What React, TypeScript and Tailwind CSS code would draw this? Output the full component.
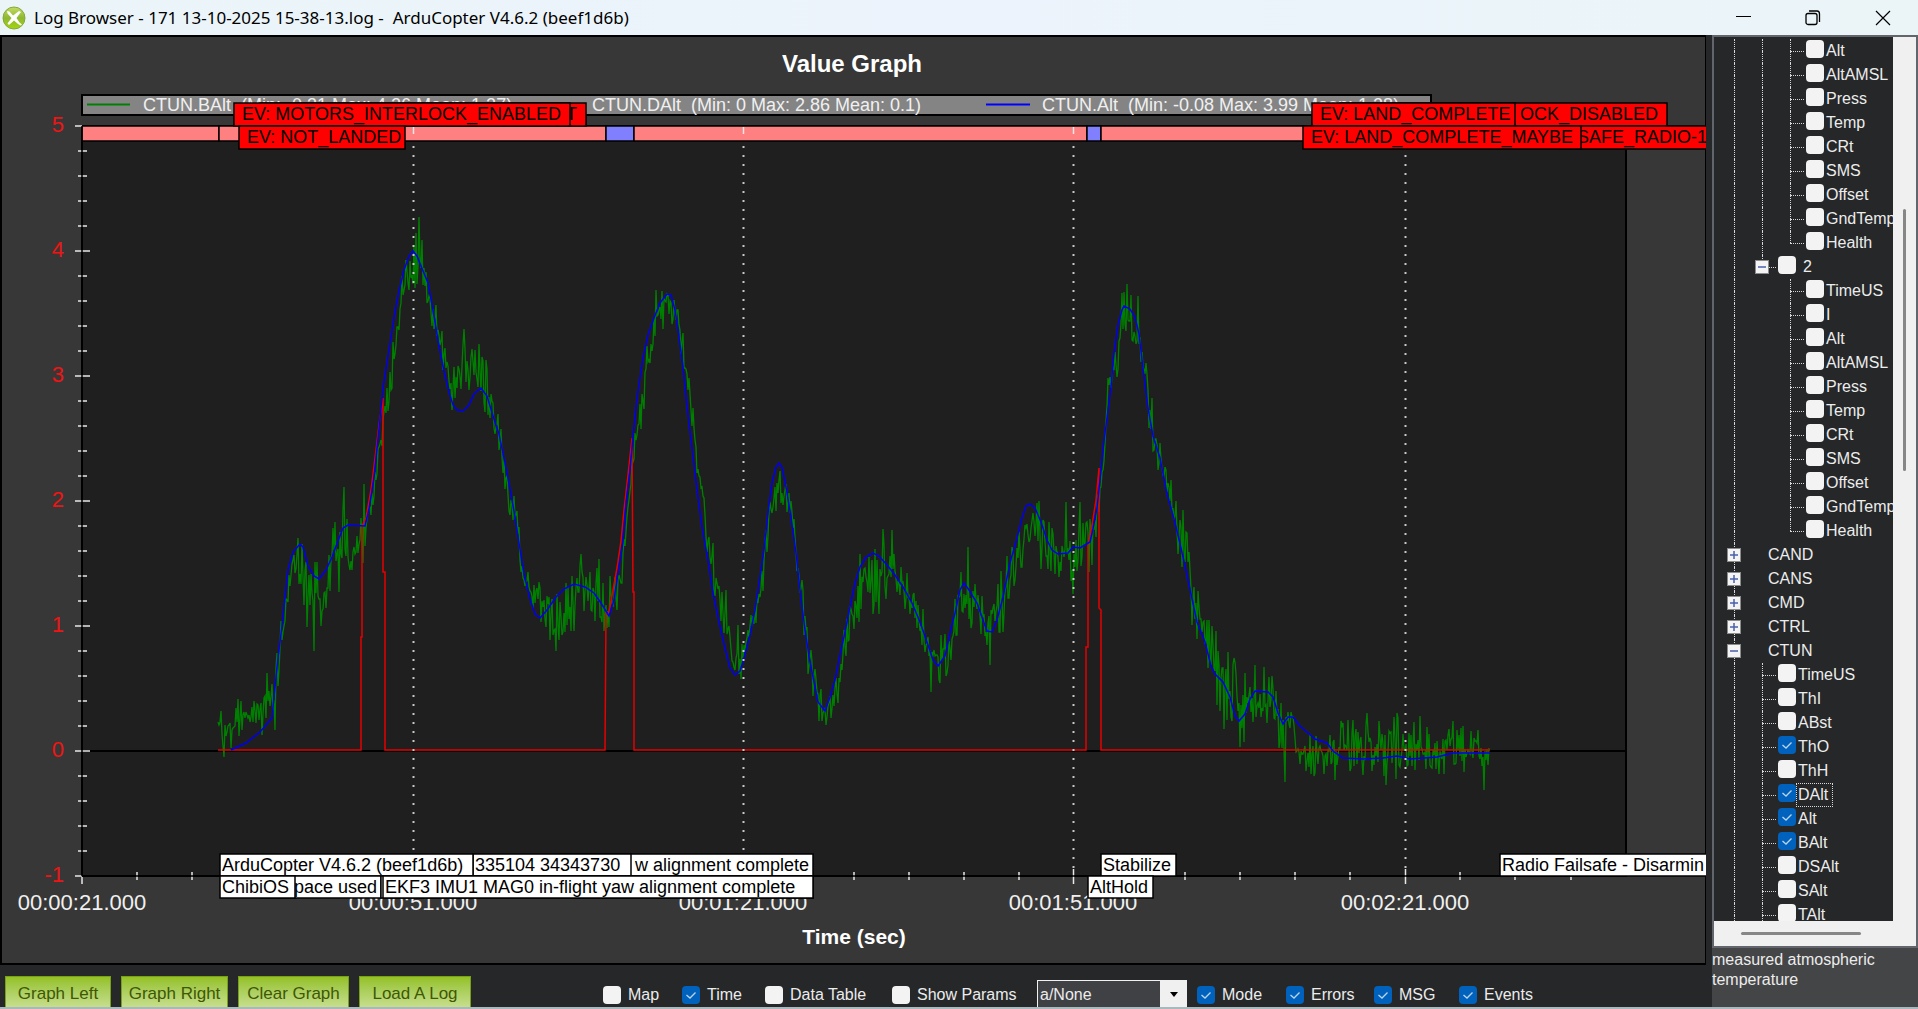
import { useState } from "react";
import clsx from "clsx";

type Point = [number, number];

// Filtered altitude (CTUN.Alt)
const ALT: Point[] = [
  [231, 750], [246, 743], [260, 732], [272, 718], [274, 697], [278, 658], [282, 626], [285, 597], [288, 570], [293, 552],
  [300, 544], [303, 547], [308, 566], [314, 576], [319, 579], [326, 570], [332, 557], [338, 541], [343, 528], [348, 525],
  [365, 526], [369, 509], [374, 478], [377, 448], [379, 429], [383, 388], [388, 356], [395, 312], [399, 291], [404, 270],
  [409, 256], [413, 251], [417, 256], [421, 266], [428, 283], [433, 310], [439, 346], [444, 371], [449, 392], [453, 405],
  [457, 410], [463, 411], [469, 405], [474, 394], [481, 388], [487, 396], [494, 419], [499, 434], [505, 463], [511, 494],
  [515, 517], [519, 543], [524, 574], [530, 599], [535, 614], [540, 618], [547, 610], [556, 597], [564, 589], [574, 584],
  [585, 587], [594, 593], [601, 603], [609, 616], [614, 600], [618, 573], [623, 542], [626, 503], [630, 470], [633, 437],
  [637, 398], [643, 358], [648, 335], [654, 318], [660, 303], [667, 294], [671, 295], [675, 310], [679, 337], [683, 367],
  [687, 407], [692, 448], [697, 490], [702, 527], [708, 560], [713, 593], [719, 622], [725, 648], [730, 668], [735, 675],
  [740, 671], [744, 658], [750, 635], [755, 610], [760, 577], [764, 550], [768, 513], [772, 483], [776, 467], [779, 463],
  [782, 467], [786, 487], [791, 517], [796, 553], [800, 590], [805, 630], [810, 662], [814, 682], [818, 702], [825, 711],
  [830, 697], [835, 680], [840, 655], [845, 632], [850, 607], [855, 583], [860, 567], [866, 557], [873, 553], [879, 556],
  [887, 565], [895, 575], [903, 587], [912, 603], [920, 622], [928, 645], [933, 660], [938, 666], [945, 656], [950, 633],
  [955, 613], [960, 590], [964, 583], [969, 590], [977, 603], [983, 620], [987, 631], [992, 632], [997, 620], [1003, 597],
  [1010, 563], [1017, 538], [1022, 518], [1026, 506], [1030, 504], [1035, 508], [1041, 522], [1047, 540], [1052, 550], [1058, 554],
  [1068, 553], [1073, 547], [1080, 548], [1090, 542], [1093, 529], [1097, 508], [1101, 470], [1103, 449], [1107, 418], [1111, 387],
  [1114, 353], [1118, 325], [1122, 310], [1124, 306], [1130, 309], [1135, 317], [1139, 334], [1143, 368], [1148, 408], [1153, 436],
  [1160, 458], [1167, 494], [1173, 515], [1178, 535], [1185, 566], [1191, 594], [1197, 622], [1205, 642], [1211, 666], [1215, 674],
  [1223, 682], [1230, 697], [1235, 716], [1239, 721], [1245, 714], [1250, 699], [1255, 691], [1268, 692], [1273, 697], [1278, 713],
  [1283, 724], [1288, 717], [1293, 717], [1300, 726], [1315, 739], [1327, 743], [1333, 751], [1343, 758], [1363, 759], [1383, 758],
  [1397, 756], [1410, 759], [1437, 757], [1453, 753], [1490, 753],
];

// Desired altitude (CTUN.DAlt)
const DALT: Point[] = [
  [218, 750], [361, 750], [361, 637], [362, 637], [362, 526], [366, 518], [371, 490], [376, 450], [379, 425], [383, 398],
  [383, 572], [385, 572], [385, 750], [605, 750], [606, 613], [609, 612], [613, 590], [617, 568], [621, 541], [624, 510],
  [628, 475], [632, 438], [633, 592], [634, 592], [634, 750], [1086, 750], [1086, 647], [1088, 647], [1088, 546], [1092, 525],
  [1096, 500], [1099, 468], [1099, 608], [1101, 610], [1101, 750], [1490, 750],
];

// Barometer altitude (CTUN.BAlt): x, centre, noise
const BALT: [number, number, number][] = [
  [218, 732, 12], [224, 735, 20], [236, 725, 22], [250, 718, 14], [258, 705, 22], [270, 705, 22], [275, 690, 30], [281, 640, 20],
  [287, 600, 15], [294, 565, 22], [300, 572, 25], [306, 590, 28], [313, 595, 35], [318, 600, 25], [326, 590, 15], [332, 560, 25],
  [344, 545, 32], [348, 560, 25], [356, 555, 18], [365, 530, 30], [372, 500, 18], [380, 455, 14], [387, 400, 22], [394, 350, 20],
  [402, 285, 12], [408, 262, 25], [414, 258, 28], [420, 258, 32], [426, 285, 16], [433, 305, 20], [441, 350, 15], [449, 385, 22],
  [455, 390, 15], [463, 362, 28], [470, 375, 25], [478, 375, 25], [486, 390, 25], [494, 415, 18], [502, 455, 20], [505, 478, 15],
  [515, 520, 15], [520, 550, 18], [528, 590, 18], [536, 598, 20], [548, 612, 20], [555, 625, 22], [565, 605, 28], [575, 595, 26],
  [588, 590, 28], [600, 600, 28], [610, 612, 26], [617, 600, 25], [625, 540, 18], [633, 470, 18], [641, 400, 25], [649, 350, 20],
  [656, 318, 20], [668, 302, 18], [676, 312, 15], [684, 340, 18], [690, 400, 12], [697, 455, 15], [704, 505, 18], [713, 570, 20],
  [724, 610, 15], [733, 665, 12], [740, 660, 18], [750, 640, 18], [758, 605, 15], [765, 550, 20], [775, 495, 18], [782, 490, 22],
  [790, 505, 12], [798, 565, 15], [804, 615, 18], [808, 650, 22], [816, 685, 20], [822, 710, 12], [830, 705, 15], [838, 680, 22],
  [850, 620, 20], [858, 590, 22], [868, 580, 24], [878, 580, 26], [890, 572, 24], [900, 577, 20], [910, 600, 20], [920, 620, 18],
  [930, 655, 18], [940, 660, 18], [950, 650, 28], [960, 595, 28], [968, 598, 28], [980, 615, 25], [990, 625, 30], [1000, 615, 28],
  [1010, 580, 25], [1020, 545, 22], [1030, 525, 22], [1040, 530, 26], [1050, 540, 26], [1063, 550, 28], [1073, 570, 20], [1083, 545, 28],
  [1093, 545, 20], [1102, 475, 20], [1108, 400, 18], [1117, 360, 14], [1122, 315, 18], [1130, 310, 20], [1137, 325, 26], [1143, 360, 12],
  [1151, 425, 25], [1158, 448, 18], [1168, 490, 18], [1180, 535, 26], [1190, 570, 28], [1197, 620, 20], [1205, 640, 22], [1215, 660, 26],
  [1225, 690, 32], [1240, 705, 32], [1250, 700, 26], [1265, 700, 24], [1278, 715, 22], [1284, 735, 30], [1290, 720, 15], [1298, 750, 14],
  [1312, 755, 18], [1330, 752, 20], [1350, 745, 24], [1365, 750, 24], [1400, 748, 26], [1440, 750, 22], [1490, 750, 18],
];

const SPIKES: Point[] = [
  [224, 757], [298, 538], [314, 651], [344, 487], [364, 484], [419, 217], [464, 329], [486, 360], [556, 651], [581, 554],
  [656, 290], [726, 590], [738, 625], [826, 725], [883, 529], [892, 530], [931, 692], [968, 547], [1066, 502], [1080, 502],
  [1124, 292], [1138, 296], [1183, 510], [1224, 729], [1264, 667], [1285, 782], [1335, 780], [1348, 720], [1453, 721], [1484, 790],
];

function toPath(points: Point[]) {
  return "M" + points.map((p) => p.join(",")).join("L");
}

function noisyPath() {
  let seed = 171;
  const rand = () => {
    seed = (seed * 16807) % 2147483647;
    return seed / 2147483647;
  };
  const out: Point[] = [];
  let i = 0;
  for (let x = 218; x <= 1489; x += 1) {
    while (i < BALT.length - 2 && x > BALT[i + 1][0]) i++;
    const [x0, y0, a0] = BALT[i];
    const [x1, y1, a1] = BALT[i + 1];
    const t = (x - x0) / (x1 - x0);
    const amp = a0 + (a1 - a0) * t;
    const noise = (rand() + rand() - 1) * amp * 1.6;
    const spike = SPIKES.find((s) => s[0] === x);
    out.push([x, spike ? spike[1] : Math.round(y0 + (y1 - y0) * t + noise)]);
  }
  return toPath(out);
}

const BALT_PATH = noisyPath();
const ALT_PATH = toPath(ALT);
const DALT_PATH = toPath(DALT);

const TIMES = [
  { x: 82, label: "00:00:21.000" },
  { x: 413, label: "00:00:51.000" },
  { x: 743, label: "00:01:21.000" },
  { x: 1073, label: "00:01:51.000" },
  { x: 1405, label: "00:02:21.000" },
];

const MODES = [
  { x: 82, w: 137, color: "#ff8080" },
  { x: 219, w: 387, color: "#ff8080" },
  { x: 606, w: 28, color: "#8080ff" },
  { x: 634, w: 453, color: "#ff8080" },
  { x: 1087, w: 14, color: "#8080ff" },
  { x: 1101, w: 389, color: "#ff8080" },
];

// Later flags lie over earlier ones
const FLAGS = [
  { x: 260, w: 326, y: 103, end: true, text: "T", red: true },
  { x: 234, w: 336, y: 103, text: "EV: MOTORS_INTERLOCK_ENABLED", red: true },
  { x: 239, w: 166, y: 126, text: "EV: NOT_LANDED", red: true },
  { x: 1340, w: 327, y: 103, end: true, text: "OCK_DISABLED", red: true },
  { x: 1312, w: 203, y: 103, text: "EV: LAND_COMPLETE", red: true },
  { x: 1560, w: 156, y: 126, end: true, text: "SAFE_RADIO-1", red: true },
  { x: 1303, w: 278, y: 126, text: "EV: LAND_COMPLETE_MAYBE", red: true },
  { x: 560, w: 253, y: 854, end: true, text: "w alignment complete" },
  { x: 473, w: 158, y: 854, text: "335104 34343730" },
  { x: 220, w: 253, y: 854, text: "ArduCopter V4.6.2 (beef1d6b)" },
  { x: 260, w: 121, y: 876, end: true, text: "pace used" },
  { x: 220, w: 75, y: 876, text: "ChibiOS" },
  { x: 381, w: 432, y: 876, text: "" },
  { x: 383, w: 430, y: 876, text: "EKF3 IMU1 MAG0 in-flight yaw alignment complete" },
  { x: 1101, w: 75, y: 854, text: "Stabilize" },
  { x: 1088, w: 65, y: 876, text: "AltHold" },
  { x: 1500, w: 240, y: 854, text: "Radio Failsafe - Disarmin" },
];

function Chart() {
  const minorX: number[] = [];
  for (let i = 0; i <= 27; i++) if (i % 6 !== 0) minorX.push(Math.round(82 + i * 55.13));
  const minorY: number[] = [];
  for (let i = 0; i <= 30; i++) if (i % 5 !== 0) minorY.push(126 + i * 25);

  return (
    <svg
      viewBox="0 35 1708 930"
      preserveAspectRatio="xMinYMin meet"
      className="block min-h-0 w-full flex-1 bg-[#252729] font-['Liberation_Sans',Arial,sans-serif]"
    >
      <rect x="1" y="36" width="1705" height="928" fill="#373737" stroke="#000" strokeWidth="2" />
      <text x="852" y="72" textAnchor="middle" fontSize="24" fontWeight="bold" fill="#fff">Value Graph</text>
      <rect x="82" y="126" width="1544" height="750" fill="#1f1f1f" stroke="#000" strokeWidth="2" />

      {/* Legend */}
      <rect x="82" y="95" width="1349" height="20" fill="#848484" stroke="#000" strokeWidth="2" />
      <g fontSize="18" fill="#f0f0f0">
        <path d="M87 104.500H130" stroke="#008000" strokeWidth="2" />
        <text x="143" y="111" xmlSpace="preserve">CTUN.BAlt  (Min: -0.31 Max: 4.26 Mean: 1.27)</text>
        <text x="592" y="111" xmlSpace="preserve">CTUN.DAlt  (Min: 0 Max: 2.86 Mean: 0.1)</text>
        <path d="M986 104.500H1030" stroke="#0000ff" strokeWidth="2" />
        <text x="1042" y="111" xmlSpace="preserve">CTUN.Alt  (Min: -0.08 Max: 3.99 Mean: 1.28)</text>
      </g>

      {/* Flight modes */}
      {MODES.map((m) => (
        <rect key={m.x} x={m.x} y="126" width={m.w} height="15" fill={m.color} stroke="#000" strokeWidth="1.500" />
      ))}

      {/* Axes */}
      <path d="M82 751H1626" stroke="#000" strokeWidth="2" />
      <g stroke="#e8e8e8" strokeWidth="1.500">
        {minorY.map((y) => <path key={y} d={`M78 ${y}H87`} />)}
        {minorX.map((x) => <path key={x} d={`M${x} 872V880`} />)}
        {[126, 251, 376, 501, 626, 751, 876].map((y) => (
          <path key={y} d={y === 126 || y === 876 ? `M75 ${y}H82` : `M75 ${y}H90`} />
        ))}
        <path d="M82 877V884" />
        {TIMES.slice(1).map((t) => <path key={t.x} d={`M${t.x + 0.5} 869V884M${t.x + 0.5} 127V134`} />)}
      </g>
      <path d="M82 126V876M82 876H1626" stroke="#000" strokeWidth="1.500" />
      <g fontSize="22" fill="#f01414" textAnchor="end">
        {[5, 4, 3, 2, 1, 0, -1].map((v) => (
          <text key={v} x="64" y={757 - v * 125}>{v}</text>
        ))}
      </g>
      <g fontSize="22" fill="#f0f0f0" textAnchor="middle">
        {TIMES.map((t) => (
          <text key={t.x} x={t.x} y="910">{t.label}</text>
        ))}
      </g>
      <text x="854" y="944" textAnchor="middle" fontSize="21" fontWeight="bold" fill="#fff">Time (sec)</text>

      {/* Series */}
      <g fill="none" strokeWidth="1.500">
        <path d={BALT_PATH} stroke="#008000" strokeWidth="1.300" />
        <path d={DALT_PATH} stroke="#e60000" />
        <path d={ALT_PATH} stroke="#0000f0" />
      </g>
      {TIMES.slice(1).map((t) => (
        <path key={t.x} d={`M${t.x + 0.5} 146V868`} stroke="#c8c8c8" strokeWidth="2" strokeDasharray="2 7" />
      ))}

      {FLAGS.map((f) => (
        <g key={f.text + f.x}>
          <rect x={f.x} y={f.y} width={f.w} height={f.red ? 23 : 22} fill={f.red ? "#ff0000" : "#fff"} stroke="#000" strokeWidth="1.500" />
          <text
            x={f.end ? f.x + f.w - (f.red ? 9 : 4) : f.x + (f.red ? 8 : 2)}
            y={f.y + 17}
            textAnchor={f.end ? "end" : "start"}
            fontSize="18"
            fill="#000"
          >
            {f.text}
          </text>
        </g>
      ))}
      <path d="M1707 35V965" stroke="#252729" strokeWidth="2" />
    </svg>
  );
}

function Check({ id, defaultChecked }: { id: string; defaultChecked?: boolean }) {
  const [checked, setChecked] = useState(!!defaultChecked);
  return (
    <span className="relative block h-[18px] w-[18px] shrink-0">
      <input
        id={id}
        type="checkbox"
        checked={checked}
        onChange={(e) => setChecked(e.target.checked)}
        className="block h-[18px] w-[18px] appearance-none rounded bg-[#f3f3f3] checked:bg-[#0062bd]"
      />
      {checked && (
        <svg viewBox="0 0 18 18" className="pointer-events-none absolute inset-0 h-[18px] w-[18px]">
          <path d="M4.500 9L8 12L13.500 6.500" fill="none" stroke="#b9d5ee" strokeWidth="1.300" />
        </svg>
      )}
    </span>
  );
}

// Guides, one character for a column:
// "|" line, " " blank, "t" branch, "e" last branch, "+"/"-" expander, "n" last expander
type Row = { guides: string; label: string; checked?: boolean; focused?: boolean };

const BARO = ["Alt", "AltAMSL", "Press", "Temp", "CRt", "SMS", "Offset", "GndTemp", "Health"];

const ROWS: Row[] = [
  ...BARO.map((label) => ({ guides: label === "Health" ? "||e" : "||t", label })),
  { guides: "|n", label: "2" },
  ...["TimeUS", "I", ...BARO].map((label) => ({ guides: label === "Health" ? "| e" : "| t", label })),
  { guides: "+", label: "CAND" },
  { guides: "+", label: "CANS" },
  { guides: "+", label: "CMD" },
  { guides: "+", label: "CTRL" },
  { guides: "-", label: "CTUN" },
  { guides: "|t", label: "TimeUS" },
  { guides: "|t", label: "ThI" },
  { guides: "|t", label: "ABst" },
  { guides: "|t", label: "ThO", checked: true },
  { guides: "|t", label: "ThH" },
  { guides: "|t", label: "DAlt", checked: true, focused: true },
  { guides: "|t", label: "Alt", checked: true },
  { guides: "|t", label: "BAlt", checked: true },
  { guides: "|t", label: "DSAlt" },
  { guides: "|t", label: "SAlt" },
  { guides: "|t", label: "TAlt" },
];

function Guide({ kind }: { kind: string }) {
  const box = kind === "+" || kind === "-" || kind === "n";
  return (
    <span className="relative flex h-6 w-7 shrink-0 justify-end">
      <span className="flex w-3.5 flex-col">
        <span className={clsx("h-3", kind !== " " && "border-l border-dotted border-[#d8d8d8]")} />
        <span
          className={clsx(
            "h-3",
            "|t+-".includes(kind) && "border-l border-dotted border-l-[#d8d8d8]",
            "ten".includes(kind) && "border-t border-dotted border-t-[#d8d8d8]"
          )}
        />
      </span>
      {box && (
        <button
          aria-label={kind === "+" ? "Expand" : "Collapse"}
          className="absolute top-[5px] left-[7px] h-[14px] w-[14px] border border-[#8c8c8c] bg-[#f4f4f4]"
        >
          <svg viewBox="0 0 12 12" className="block h-3 w-3">
            <path d={kind === "+" ? "M2 6H10M6 2V10" : "M2 6H10"} stroke="#4a60a8" strokeWidth="1.500" />
          </svg>
        </button>
      )}
    </span>
  );
}

function TreeRow({ row, index }: { row: Row; index: number }) {
  const root = row.guides.length === 1;
  return (
    <li className="flex h-6 items-center pl-1.5">
      {row.guides.split("").map((kind, i) => (
        <Guide key={i} kind={kind} />
      ))}
      {root ? (
        <span className="pl-5 whitespace-nowrap">{row.label}</span>
      ) : (
        <>
          <span className="pb-1 pl-0.5">
            <Check id={`field-${index}`} defaultChecked={row.checked} />
          </span>
          <label
            htmlFor={`field-${index}`}
            className={clsx(
              "h-6 border border-dotted pr-1 leading-[22px] whitespace-nowrap",
              row.focused ? "border-[#d8d8d8]" : "border-transparent",
              row.label === "2" ? "pl-1.5" : "pl-px"
            )}
          >
            {row.label}
          </label>
        </>
      )}
    </li>
  );
}

function Option({ label, className, checked }: { label: string; className: string; checked?: boolean }) {
  const id = "opt-" + label.replace(" ", "-").toLowerCase();
  return (
    <span className={clsx("flex shrink-0 items-center gap-[7px]", className)}>
      <Check id={id} defaultChecked={checked} />
      <label htmlFor={id} className="whitespace-nowrap">{label}</label>
    </span>
  );
}

const BUTTONS = [
  { label: "Graph Left", className: "w-[106px]" },
  { label: "Graph Right", className: "w-[107px]" },
  { label: "Clear Graph", className: "w-[111px]" },
  { label: "Load A Log", className: "w-[112px]" },
];

function Toolbar() {
  return (
    <div className="flex h-[42px] shrink-0 items-start overflow-hidden pt-[11px] pl-[5px] text-[16px] text-[#ececec]">
      <div className="flex gap-2.5">
        {BUTTONS.map((b) => (
          <button
            key={b.label}
            className={clsx(
              "h-9 shrink-0 border border-[#79a01c] bg-linear-to-b from-[#94c11f] to-[#cde296] text-[17px] whitespace-nowrap text-[#405704]",
              b.className
            )}
          >
            {b.label}
          </button>
        ))}
      </div>
      <div className="ml-[132px] flex h-9 items-center pt-px">
        <Option label="Map" className="w-[79px]" />
        <Option label="Time" className="w-[83px]" checked />
        <Option label="Data Table" className="w-[127px]" />
        <Option label="Show Params" className="w-[145px]" />
        <div className="relative mr-2.5 h-[30px] w-[150px] shrink-0">
          <select
            aria-label="Preset graph"
            className="h-[30px] w-full appearance-none border border-[#f0f0f0] bg-[#404144] pl-0.5 text-[16px] text-[#ececec]"
          >
            <option>a/None</option>
          </select>
          <span className="pointer-events-none absolute top-0 right-0 flex h-[30px] w-[27px] items-center justify-center bg-[#f0f0f0]">
            <svg viewBox="0 0 8 5" className="h-[5px] w-2"><path d="M0 0H8L4 5Z" fill="#000" /></svg>
          </span>
        </div>
        <Option label="Mode" className="w-[89px]" checked />
        <Option label="Errors" className="w-[88px]" checked />
        <Option label="MSG" className="w-[85px]" checked />
        <Option label="Events" className="w-[85px]" checked />
      </div>
    </div>
  );
}

function TitleBar() {
  return (
    <header className="flex h-[35px] shrink-0 items-center bg-linear-to-r from-[#ebf5f8] via-[#ecf3fc] to-[#ebf5f8] pl-0.5 text-black">
      <svg viewBox="0 0 24 24" className="h-6 w-6">
        <defs>
          <linearGradient id="badge" x1="0" y1="0" x2="0" y2="1">
            <stop offset="0" stopColor="#c4dc62" />
            <stop offset="0.500" stopColor="#8db832" />
            <stop offset="1" stopColor="#a4d60c" />
          </linearGradient>
        </defs>
        <circle cx="12" cy="12" r="11" fill="url(#badge)" stroke="#86a83c" />
        <path
          d="M5 5L7.500 5.500L11 9.500L17 5L19 6L14.500 12L17.500 16.500L20 18.500L18.500 19.500L16 18L12 14.500L7 19L5.500 17.500L9.500 12L5.500 7.500Z"
          fill="#fff"
        />
      </svg>
      <h1 className="pl-2 font-['Noto_Sans','Open_Sans',sans-serif] text-[17px] whitespace-pre">
        {"Log Browser - 171 13-10-2025 15-38-13.log -  ArduCopter V4.6.2 (beef1d6b)"}
      </h1>
      <div className="ml-auto flex">
        <button aria-label="Minimize" className="flex h-[35px] w-[70px] items-center justify-center">
          <svg viewBox="0 0 16 16" className="h-4 w-4"><path d="M1 6.500H16" stroke="#000" /></svg>
        </button>
        <button aria-label="Restore" className="flex h-[35px] w-[70px] items-center justify-center">
          <svg viewBox="0 0 16 16" className="h-4 w-4" fill="none" stroke="#000" strokeWidth="1.300">
            <rect x="1" y="3.500" width="11" height="11" rx="2" />
            <path d="M4 1H12Q14.500 1 14.500 4V12" />
          </svg>
        </button>
        <button aria-label="Close" className="flex h-[35px] w-[70px] items-center justify-center">
          <svg viewBox="0 0 16 16" className="h-4 w-4"><path d="M1 1L15 15M15 1L1 15" stroke="#000" strokeWidth="1.200" /></svg>
        </button>
      </div>
    </header>
  );
}

export default function App() {
  return (
    <div className="flex h-screen flex-col overflow-hidden bg-[#252729] font-['Liberation_Sans',Arial,sans-serif]">
      <TitleBar />
      <div className="flex min-h-0 flex-1">
        <main className="flex min-w-0 flex-1 flex-col">
          <Chart />
          <Toolbar />
        </main>

        {/* Message fields */}
        <aside className="ml-1 flex w-[206px] shrink-0 flex-col bg-[#444547] text-[16px] text-[#ececec]">
          <div className="flex min-h-0 flex-1 flex-col border-2 border-[#62656b] bg-[#252729]">
            <div className="flex min-h-0 flex-1">
              <ul className="min-w-0 flex-1 overflow-hidden pt-0.5">
                {ROWS.map((row, i) => (
                  <TreeRow key={i} row={row} index={i} />
                ))}
              </ul>
              <div className="flex w-[23px] shrink-0 justify-center bg-[#f0f0f0] pt-[172px]">
                <div className="h-[262px] w-[3px] rounded bg-[#868686]" />
              </div>
            </div>
            <div className="flex h-[25px] shrink-0 items-center bg-[#f0f0f0] pl-[27px]">
              <div className="h-[3px] w-[120px] rounded bg-[#868686]" />
            </div>
          </div>
          <p className="h-[59px] shrink-0 pt-0.5 leading-5">measured atmospheric temperature</p>
        </aside>
      </div>
      <div className="h-0.5 shrink-0 bg-[#a9b8bd]" />
    </div>
  );
}
